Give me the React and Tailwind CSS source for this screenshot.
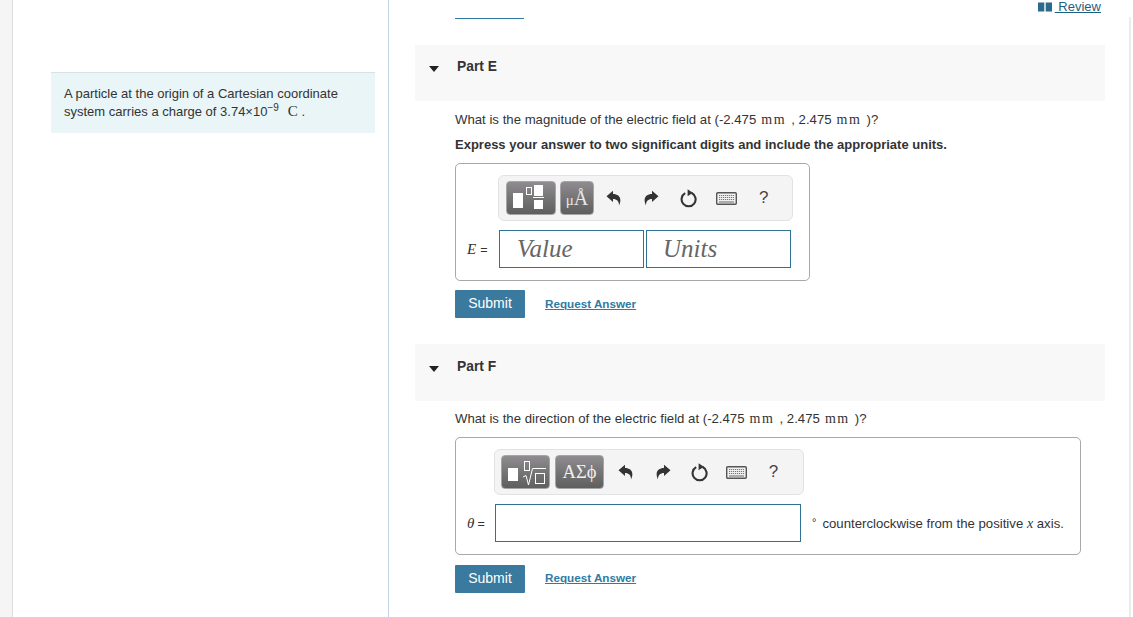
import React from 'react'

const serif = "font-['Liberation_Serif',serif]"

const Undo = ({ flip }) => (
  <svg width="16" height="16" viewBox="0 0 16 16" className={flip ? '-scale-x-100' : ''}>
    <path d="M0.5 6.2L7 0.8V4C12.8 4 16.5 8 13 15.5C13.2 11.5 11 9 7 9V12z" fill="#333" />
  </svg>
)

const Reload = () => (
  <svg width="18" height="20" viewBox="0 0 18 20" fill="none">
    <path d="M11.6 5A7 7 0 1 1 5.2 5.2" stroke="#333" strokeWidth="2.1" />
    <path d="M7.6 1.2L12.8 4.8 7.6 8.2z" fill="#333" />
  </svg>
)

const Keyboard = () => (
  <svg width="21" height="13" viewBox="0 0 21 13">
    <rect x="0.7" y="0.7" width="19.6" height="11.6" rx="1" fill="#f0f0f0" stroke="#555" strokeWidth="1.4" />
    <path d="M3 3.5h15M3 5.5h15M3 7.5h15" stroke="#777" strokeDasharray="1.2 0.8" />
    <path d="M3 10h15" stroke="#666" />
  </svg>
)

const ToolButton = ({ width, children }) => (
  <div className={`${width} h-[34px] rounded-[4px] border border-[#a5a5a5] bg-gradient-to-b from-[#8e8c8e] to-[#5f5f5f] flex items-center justify-center text-white`}>
    {children}
  </div>
)

const ToolIcons = ({ offset, cell }) => (
  <div className={`flex items-center ${offset} text-[#333]`}>
    <div className={`${cell} flex justify-center`}><Undo /></div>
    <div className={`${cell} flex justify-center`}><Undo flip /></div>
    <div className={`${cell} flex justify-center`}><Reload /></div>
    <div className={`${cell} flex justify-center`}><Keyboard /></div>
    <div className={`${cell} flex justify-center text-[17px] text-[#444]`}>?</div>
  </div>
)

const PartHeader = ({ title, height, top }) => (
  <div className={`${height} ${top} bg-[#f8f8f8] flex items-start pl-[14px]`}>
    <div className="mt-[7px] w-0 h-0 border-l-[5px] border-r-[5px] border-t-[6px] border-l-transparent border-r-transparent border-t-[#222]"></div>
    <div className="ml-[18px] text-[13.8px] leading-[16px] font-bold text-[#333]">{title}</div>
  </div>
)

const Actions = ({ link }) => (
  <div className="flex items-center ml-[40px]">
    <button className="w-[70px] h-[28px] bg-[#3a7a9e] text-white text-[14px] font-medium pb-[2px] rounded-[1px]">Submit</button>
    <a className={`ml-[20px] ${link} text-[11.7px] leading-[14px] font-bold text-[#2f7ba3] underline`}>Request Answer</a>
  </div>
)

const Mm = () => <span className={`${serif} text-[14px] tracking-[1.6px] mx-[5px]`}>mm</span>

export default function App() {
  return (
    <div className="h-[617px] w-[1133px] overflow-hidden flex bg-white text-[#333] font-['Liberation_Sans',sans-serif]">
      <div className="w-[13px] bg-[#f5f5f5] border-r border-[#dcdcdc]"></div>

      <div className="w-[376px] border-r border-[#c3d3e3] pl-[38px] pr-[13px] pt-[72px]">
        <div className="h-[61px] bg-[#e9f5f7] border-t border-[#d9e1e4] pl-[13px] pt-[12px] text-[13px] leading-[18px] text-[#333]">
          <div>A particle at the origin of a Cartesian coordinate</div>
          <div className="h-[18px] -mt-[1px]">
            system carries a charge of 3.74×10<span className="text-[10px] leading-none relative -top-[5px]">−9</span>
            <span className={`${serif} text-[15px] ml-[9px]`}>C</span> .
          </div>
        </div>
      </div>

      <div className="w-[716px] pl-[26px]">
        <div className="h-[45px] flex justify-between items-start">
          <div className="mt-[18px] ml-[40px] w-[69px] h-px bg-[#2f7ba3]"></div>
          <div className="flex items-center pr-[4px] text-[13px] leading-[14px] text-[#1f5f80]">
            <svg width="14" height="10" viewBox="0 0 14 10" className="mr-[3px]">
              <path d="M0 0.5h6.3v9H0zM7.7 0.5H14v9H7.7z" fill="#2a6a8a" />
            </svg>
            <span className="underline whitespace-pre"> Review</span>
          </div>
        </div>

        <PartHeader title="Part E" height="h-[56px]" top="pt-[14px]" />
        <div className="pl-[40px] pt-[11px]">
          <p className="text-[13.2px] leading-[16px] whitespace-nowrap">
            What is the magnitude of the electric field at (-2.475<Mm />, 2.475<Mm />)?
          </p>
          <p className="mt-[9px] text-[13px] leading-[16px] font-bold">
            Express your answer to two significant digits and include the appropriate units.
          </p>
          <div className="mt-[10px] w-[355px] h-[118px] border border-[#a8a8a8] rounded-[5px] pl-[42px] pt-[11px]">
            <div className="w-[295px] h-[46px] bg-[#f4f4f4] border border-[#e2e2e2] rounded-[6px] flex items-center pl-[7px] gap-[4px]">
              <ToolButton width="w-[50px]">
                <svg width="48" height="32" viewBox="0 0 48 32" fill="#fff">
                  <path d="M6 11h10v15H6zM27 3h9v11h-9zM26 15h11v1H26zM27 18h9v9h-9z" />
                  <rect x="19.5" y="5.5" width="5" height="7" fill="none" stroke="#fff" />
                </svg>
              </ToolButton>
              <ToolButton width="w-[34px]">
                <span className={`${serif} text-[#e8e8e8] leading-none`}>
                  <span className="text-[15px]">μ</span><span className="text-[20px]">Å</span>
                </span>
              </ToolButton>
              <ToolIcons offset="-ml-[3px]" cell="w-[37.5px]" />
            </div>
            <div className="flex items-center mt-[9px] -ml-[31px]">
              <div className="w-[32px] text-[12.5px] whitespace-nowrap">
                <span className={`${serif} italic text-[15px] mr-[4px]`}>E</span>=
              </div>
              <input readOnly placeholder="Value" className={`w-[145px] h-[38px] border border-[#2e7396] pl-[17px] ${serif} italic text-[25px] placeholder:text-[#666] outline-none`} />
              <input readOnly placeholder="Units" className={`ml-[2px] w-[145px] h-[38px] border border-[#2e7396] pl-[16px] ${serif} italic text-[25px] placeholder:text-[#666] outline-none`} />
            </div>
          </div>
        </div>
        <div className="mt-[9px]"><Actions link="" /></div>

        <div className="mt-[26px]"><PartHeader title="Part F" height="h-[57px]" top="pt-[15px]" /></div>
        <div className="pl-[40px] pt-[10px]">
          <p className="text-[13.2px] leading-[16px] whitespace-nowrap">
            What is the direction of the electric field at (-2.475<Mm />, 2.475<Mm />)?
          </p>
          <div className="mt-[10px] w-[626px] h-[118px] border border-[#a8a8a8] rounded-[5px] pl-[38px] pt-[11px]">
            <div className="w-[310px] h-[46px] bg-[#f4f4f4] border border-[#e2e2e2] rounded-[6px] flex items-center pl-[6px] gap-[5px]">
              <ToolButton width="w-[49px]">
                <svg width="47" height="32" viewBox="0 0 47 32" fill="none" stroke="#fff">
                  <path d="M6 12h10v13H6z" fill="#fff" stroke="none" />
                  <rect x="22.5" y="5.5" width="5" height="9" />
                  <path d="M21 21l3-1.5 2.5 9.5 4-16.5H44" />
                  <rect x="33.5" y="17.5" width="9" height="10" />
                </svg>
              </ToolButton>
              <ToolButton width="w-[49px]">
                <span className={`${serif} text-[18.5px] leading-none text-[#f0f0f0]`}>ΑΣϕ</span>
              </ToolButton>
              <ToolIcons offset="-ml-[2px]" cell="w-[37px]" />
            </div>
            <div className="flex items-center mt-[9px] -ml-[27px]">
              <div className="w-[28px] text-[12.5px] whitespace-nowrap">
                <span className={`${serif} italic text-[15px] mr-[3px]`}>θ</span>=
              </div>
              <input readOnly className="w-[306px] h-[38px] border border-[#2e7396] outline-none" />
              <div className="ml-[11px] text-[13.2px] whitespace-nowrap">
                <span className="text-[11px] relative -top-[2px]">°</span>
                <span className="ml-[6px]">counterclockwise from the positive </span>
                <span className={`${serif} italic text-[14px]`}>x</span> axis.
              </div>
            </div>
          </div>
        </div>
        <div className="mt-[10px]"><Actions link="-mt-[2px]" /></div>
      </div>

      <div className="w-[26px] flex justify-end">
        <div className="w-[2px] mt-[17px] bg-[#ececec]"></div>
      </div>
    </div>
  )
}
